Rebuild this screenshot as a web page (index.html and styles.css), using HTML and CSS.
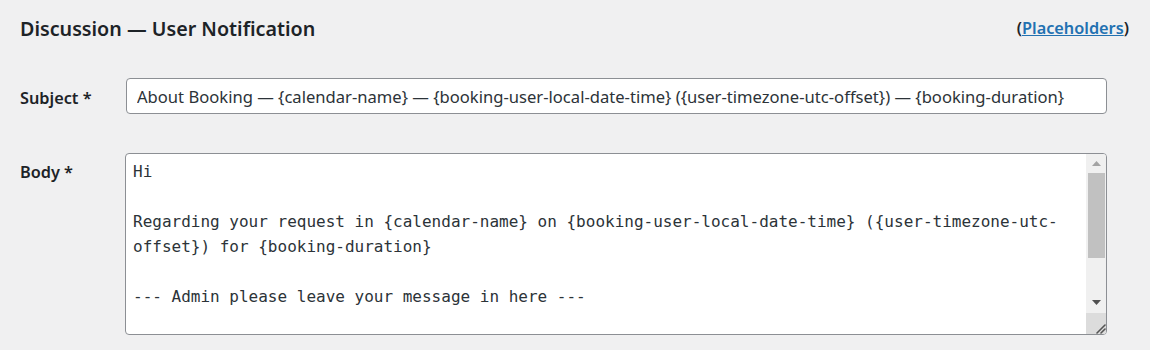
FILE: index.html
```html
<!DOCTYPE html>
<html lang="en">
<head>
    <meta charset="UTF-8">
    <title>Discussion — User Notification</title>
    <link rel="stylesheet" href="styles.css">
</head>
<body>
    <div class="wrap">
        <div class="section-head">
            <h2>Discussion — User Notification</h2>
            <span class="help">(<a href="#">Placeholders</a>)</span>
        </div>

        <div class="form-row">
            <label for="subject">Subject *</label>
            <input type="text" id="subject" value="About Booking — {calendar-name} — {booking-user-local-date-time} ({user-timezone-utc-offset}) — {booking-duration}">
        </div>

        <div class="form-row top">
            <label for="body">Body *</label>
            <div class="textarea-wrap">
                <textarea id="body" spellcheck="false">Hi

Regarding your request in {calendar-name} on {booking-user-local-date-time} ({user-timezone-utc-offset}) for {booking-duration}

--- Admin please leave your message in here ---
</textarea>
                <!-- scrollbar drawn by hand, the headless browser hides native ones -->
                <div class="scrollbar">
                    <div class="sb-btn">
                        <svg width="9" height="5" viewBox="0 0 9 5"><path d="M0 5L4.5 0L9 5Z" fill="#a3a3a3"/></svg>
                    </div>
                    <div class="sb-track"><div class="sb-thumb"></div></div>
                    <div class="sb-btn">
                        <svg width="9" height="5" viewBox="0 0 9 5"><path d="M0 0L4.5 5L9 0Z" fill="#505050"/></svg>
                    </div>
                    <div class="sb-corner">
                        <svg width="12" height="12" viewBox="0 0 12 12"><path d="M11 3L3 11M11 7L7 11" stroke="#555" stroke-width="1.6" stroke-linecap="round"/></svg>
                    </div>
                </div>
            </div>
        </div>
    </div>
</body>
</html>
```

FILE: styles.css
```css
body {
    margin: 0;
    background: #f0f0f1;
    color: #1d2327;
    font-family: "Noto Sans", "Open Sans", sans-serif;
}
.wrap {
    padding: 0 21px 0 20px;
}
.section-head {
    display: flex;
    justify-content: space-between;
    align-items: center;
    height: 56px;
}
.section-head h2 {
    margin: 0;
    font-size: 19.7px;
    font-weight: 600;
}
.help {
    font-size: 16.3px;
    font-weight: 600;
    color: #1d2327;
}
.help a {
    color: #2271b1;
}
.form-row {
    display: grid;
    grid-template-columns: 106px 981px;
    align-items: center;
    margin-top: 22px;
}
.form-row.top {
    align-items: start;
    margin-top: 39px;
}
.form-row label {
    padding-top: 4px;
    font-size: 16.3px;
    font-weight: 600;
}
.form-row.top label {
    padding-top: 8px;
}
input[type="text"] {
    box-sizing: border-box;
    width: 981px;
    height: 36px;
    padding: 0 10px;
    border: 1px solid #8c8f94;
    border-radius: 4px;
    background: #fff;
    color: #2c3338;
    font-family: "Noto Sans", "Open Sans", sans-serif;
    font-size: 16.6px;
}
.textarea-wrap {
    position: relative;
    width: 982px;
    height: 182px;
    margin-left: -1px;
}
textarea {
    display: block;
    box-sizing: border-box;
    width: 100%;
    height: 100%;
    margin: 0;
    padding: 5px 27px 5px 7px;
    border: 1px solid #8c8f94;
    border-radius: 4px;
    background: #fff;
    color: #2c3338;
    font-family: "DejaVu Sans Mono", "Liberation Mono", monospace;
    font-size: 16px;
    line-height: 25px;
    overflow: hidden;
    resize: none;
}
.scrollbar {
    position: absolute;
    top: 1px;
    right: 1px;
    bottom: 1px;
    width: 20px;
    display: flex;
    flex-direction: column;
    background: #f0f0f0;
    border-top-right-radius: 3px;
    border-bottom-right-radius: 3px;
    overflow: hidden;
}
.sb-btn {
    height: 19px;
    display: flex;
    align-items: center;
    justify-content: center;
}
.sb-track {
    flex: 1;
    padding: 0 1px 0 2px;
}
.sb-thumb {
    height: 85px;
    background: #c1c1c1;
}
.sb-corner {
    height: 21px;
    margin-top: 1px;
    background: #dcdcdc;
    display: flex;
    align-items: flex-end;
    justify-content: flex-end;
}
```
